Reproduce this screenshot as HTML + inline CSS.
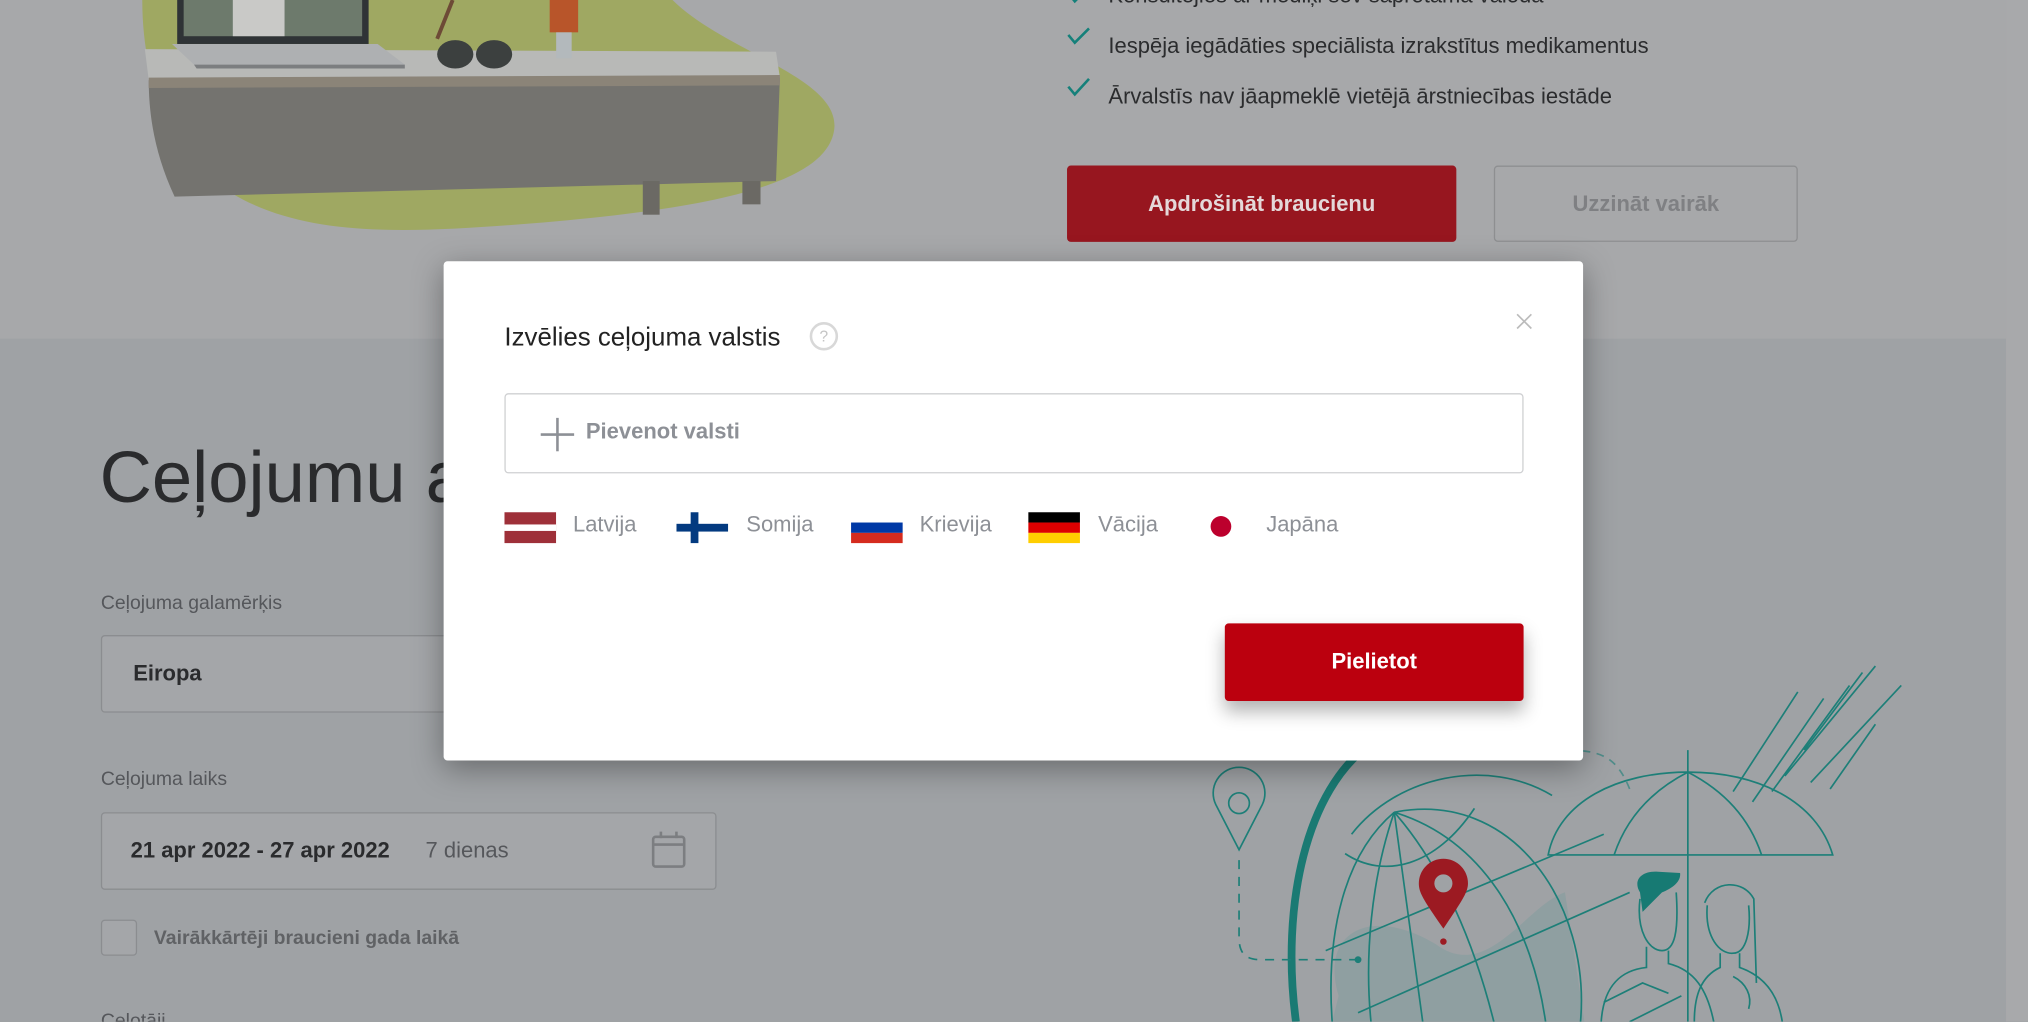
<!DOCTYPE html>
<html><head><meta charset="utf-8"><style>
html,body{margin:0;padding:0;width:2028px;height:1022px;overflow:hidden;background:#9fa2a5}
#w{position:absolute;left:0;top:0;width:1568px;height:790px;transform:scale(1.29337);transform-origin:0 0;font-family:"Liberation Sans",sans-serif;overflow:hidden}
.a{position:absolute}
.t{position:absolute;white-space:nowrap}
</style></head><body><div id="w">
<div class="a" style="left:0;top:0;width:1568px;height:262px;background:#a7a8aa"></div>
<div class="a" style="left:0;top:262px;width:1568px;height:528px;background:#9fa2a5"></div>
<div class="a" style="left:1551px;top:0;width:17px;height:790px;background:#a8a9ab"></div>

<!-- left image -->
<svg class="a" style="left:0;top:0" width="700" height="200" viewBox="0 0 700 200">
<path d="M110 0 L520 0 C560 40 650 60 645 100 C640 140 560 160 420 172 C320 180 240 185 180 150 C130 120 110 60 110 0Z" fill="#9fa862"/>
<path d="M112 38 L600 40 L603 60 L115 62Z" fill="#b8b9b7"/>
<path d="M115 62 L603 60 L600 140 L135 152 C120 120 115 90 115 62Z" fill="#74736f"/>
<path d="M115 60 L603 58 L603 66 L115 68Z" fill="#8b8478"/>
<rect x="497" y="140" width="13" height="26" fill="#6b6964"/>
<rect x="574" y="140" width="14" height="18" fill="#6b6964"/>
<rect x="137" y="0" width="148" height="34" fill="#2f3336"/>
<rect x="142" y="0" width="138" height="28" fill="#6d7a6c"/>
<rect x="180" y="0" width="40" height="28" fill="#c9c9c7"/>
<path d="M133 34 L292 34 L313 50 L150 50Z" fill="#aeb0b2"/>
<path d="M150 50 L313 50 L313 53 L152 53Z" fill="#7c7e80"/>
<ellipse cx="352" cy="42" rx="14" ry="11" fill="#3c403f"/>
<ellipse cx="382" cy="42" rx="14" ry="11" fill="#3c403f"/>
<rect x="425" y="0" width="22" height="25" fill="#b8552a"/>
<rect x="430" y="25" width="12" height="20" fill="#b3b9bc"/>
<path d="M338 30 L350 0" stroke="#6d4a36" stroke-width="3"/>
</svg>

<!-- right top -->
<svg class="a" style="left:825px;top:-10px" width="20" height="100"><path d="M1 5 L6 11 L17 0" fill="none" stroke="#15807a" stroke-width="2"/><path d="M1 37 L6 43 L17 32" fill="none" stroke="#15807a" stroke-width="2"/><path d="M1 77 L6 83 L17 71" fill="none" stroke="#15807a" stroke-width="2"/></svg>
<div class="t" style="left:857px;top:-13px;font-size:17px;color:#2b2c2e">Konsultējies ar mediķi sev saprotamā valodā</div>
<div class="t" style="left:857px;top:26px;font-size:17px;color:#2b2c2e">Iespēja iegādāties speciālista izrakstītus medikamentus</div>
<div class="t" style="left:857px;top:65px;font-size:17px;color:#2b2c2e">Ārvalstīs nav jāapmeklē vietējā ārstniecības iestāde</div>
<div class="a" style="left:825px;top:128px;width:301px;height:59px;background:#97161f;border-radius:3px;color:#e4d8d9;font-size:17px;font-weight:bold;text-align:center;line-height:59px">Apdrošināt braucienu</div>
<div class="a" style="left:1155px;top:128px;width:233px;height:57px;border:1px solid #8e8f91;border-radius:3px;color:#7f8083;font-size:17px;font-weight:bold;text-align:center;line-height:57px">Uzzināt vairāk</div>

<!-- form -->
<div class="t" style="left:77px;top:336px;font-size:56px;color:#2a2b2d">Ceļojumu apdrošināšana</div>
<div class="t" style="left:78px;top:458px;font-size:15px;color:#55575b">Ceļojuma galamērķis</div>
<div class="a" style="left:78px;top:491px;width:400px;height:58px;border:1px solid #8b8d90;border-radius:3px;background:#a4a6a9"></div>
<div class="t" style="left:103px;top:511px;font-size:17px;font-weight:bold;color:#2a2b2d">Eiropa</div>
<div class="t" style="left:78px;top:594px;font-size:15px;color:#55575b">Ceļojuma laiks</div>
<div class="a" style="left:78px;top:628px;width:474px;height:58px;border:1px solid #8b8d90;border-radius:3px;background:#a4a6a9"></div>
<div class="t" style="left:101px;top:648px;font-size:17px;font-weight:bold;color:#2a2b2d">21 apr 2022 - 27 apr 2022</div>
<div class="t" style="left:329px;top:648px;font-size:17px;color:#55575b">7 dienas</div>
<svg class="a" style="left:503px;top:642px" width="28" height="30"><rect x="2" y="5" width="24" height="23" rx="2" fill="none" stroke="#7c7e81" stroke-width="2"/><path d="M2 11 H26 M8 1 V6 M20 1 V6" stroke="#7c7e81" stroke-width="2"/></svg>
<div class="a" style="left:78px;top:711px;width:26px;height:26px;border:1px solid #8b8d90;border-radius:3px;background:#a4a6a9"></div>
<div class="t" style="left:119px;top:717px;font-size:15px;font-weight:bold;color:#606265">Vairākkārtēji braucieni gada laikā</div>
<div class="t" style="left:78px;top:781px;font-size:15px;color:#55575b">Ceļotāji</div>

<!-- illustration -->
<svg class="a" style="left:0;top:0" width="1568" height="790" viewBox="0 0 1568 790" fill="none" stroke="#1d7f78" stroke-width="1.3">
<path d="M1035 770 C1020 720 1060 700 1110 730 C1150 760 1180 700 1210 690 L1225 790 L1030 790Z" fill="#8f9fa1" stroke="none"/>
<path d="M1260 610 C1240 560 1210 590 1075 580" stroke-dasharray="6 5" opacity=".6"/>
<path d="M1060 575 C1010 610 990 700 1002 790" stroke-width="6" stroke="#1a7a73"/>
<path d="M1078 628 C1040 660 1025 720 1030 790"/>
<path d="M1078 628 C1170 610 1230 700 1222 790"/>
<path d="M1078 628 C1060 680 1055 740 1060 790"/>
<path d="M1078 628 L1100 790"/>
<path d="M1078 628 C1115 670 1140 730 1155 790"/>
<path d="M1078 628 C1150 650 1185 720 1195 790"/>
<path d="M1040 660 C1070 680 1110 670 1140 625"/>
<path d="M1045 645 C1080 600 1150 585 1200 615"/>
<path d="M1025 735 L1240 645"/>
<path d="M1050 783 L1260 690"/>
<path d="M1116 718 C1100 695 1097 690 1097 683 A19 19 0 1 1 1135 683 C1135 690 1130 697 1116 718Z" fill="#9c1a22" stroke="none"/>
<circle cx="1116" cy="683" r="7" fill="#9fa2a5" stroke="none"/>
<circle cx="1116" cy="728" r="2.5" fill="#9c1a22" stroke="none"/>
<path d="M958 657 L940 622 A20 20 0 1 1 976 622Z"/>
<circle cx="958" cy="621" r="8"/>
<path d="M958 665 V725 C958 738 964 742 975 742 H1048" stroke-dasharray="7 6"/>
<circle cx="1050" cy="742" r="2" fill="#1d7f78"/>
<path d="M1197 661 C1205 620 1250 597 1305 597 C1360 597 1405 620 1417 661Z"/>
<path d="M1305 597 C1270 615 1255 640 1248 661 M1305 597 C1340 615 1355 640 1362 661 M1305 597 V790 M1305 597 V580" />
<path d="M1340 612 L1390 535 M1355 620 L1410 540 M1370 612 L1430 530 M1380 600 L1450 515 M1400 605 L1470 530 M1415 610 L1450 560 M1395 580 L1440 520" />
<path d="M1268 690 C1262 680 1270 673 1282 674 L1299 675 C1300 683 1290 688 1285 690 L1270 705Z" fill="#177a73" stroke="none"/>
<path d="M1268 695 C1265 720 1275 735 1285 735 C1295 735 1298 720 1296 690"/>
<path d="M1273 732 V748 C1255 750 1240 760 1238 790 M1290 735 V745 C1310 750 1320 765 1325 790"/>
<path d="M1240 775 L1270 760 L1290 768 M1260 790 L1300 770"/>
<path d="M1318 698 C1325 680 1348 680 1356 695 L1358 760 M1320 700 C1318 725 1330 738 1340 737 C1350 737 1354 720 1352 700 M1330 737 V748 C1315 755 1310 770 1310 790 M1345 737 V748 C1365 755 1375 770 1378 790"/>
<path d="M1340 755 C1350 760 1355 770 1352 780"/>
</svg>

<!-- modal -->
<div class="a" style="left:343px;top:202px;width:881px;height:386px;background:#fff;border-radius:3px;box-shadow:0 6px 24px rgba(0,0,0,.35)">
<div class="t" style="left:47px;top:48px;font-size:20px;color:#222">Izvēlies ceļojuma valstis</div>
<div class="a" style="left:283px;top:47px;width:18px;height:18px;border:2px solid #d8d8d8;border-radius:50%;color:#c4c4c4;font-size:12px;text-align:center;line-height:18px">?</div>
<svg class="a" style="left:829px;top:40px" width="13" height="13"><path d="M1 1 L12 12 M12 1 L1 12" stroke="#bbb" stroke-width="1.3"/></svg>
<div class="a" style="left:47px;top:102px;width:786px;height:60px;border:1px solid #cfd0d2;border-radius:3px"></div>
<svg class="a" style="left:75px;top:121px" width="26" height="26"><path d="M13 0 V26 M0 13 H26" stroke="#8d9096" stroke-width="2"/></svg>
<div class="t" style="left:110px;top:122px;font-size:17px;font-weight:bold;color:#8d9096">Pievenot valsti</div>
<svg class="a" style="left:47px;top:194px" width="40" height="24"><rect width="40" height="24" fill="#9e3039"/><rect y="9.5" width="40" height="5" fill="#fff"/></svg>
<div class="t" style="left:100px;top:194px;font-size:17px;color:#8d9096">Latvija</div>
<svg class="a" style="left:180px;top:194px" width="40" height="24"><rect width="40" height="24" fill="#fff"/><rect x="11" width="6" height="24" fill="#033a80"/><rect y="9" width="40" height="6" fill="#033a80"/></svg>
<div class="t" style="left:234px;top:194px;font-size:17px;color:#8d9096">Somija</div>
<svg class="a" style="left:315px;top:194px" width="40" height="24"><rect width="40" height="24" fill="#fff"/><rect y="8" width="40" height="8" fill="#0039a6"/><rect y="16" width="40" height="8" fill="#d52b1e"/></svg>
<div class="t" style="left:368px;top:194px;font-size:17px;color:#8d9096">Krievija</div>
<svg class="a" style="left:452px;top:194px" width="40" height="24"><rect width="40" height="8" fill="#000"/><rect y="8" width="40" height="8" fill="#dd0000"/><rect y="16" width="40" height="8" fill="#ffce00"/></svg>
<div class="t" style="left:506px;top:194px;font-size:17px;color:#8d9096">Vācija</div>
<svg class="a" style="left:591px;top:197px" width="20" height="20"><circle cx="10" cy="8" r="8" fill="#bc002d"/></svg>
<div class="t" style="left:636px;top:194px;font-size:17px;color:#8d9096">Japāna</div>
<div class="a" style="left:604px;top:280px;width:231px;height:60px;background:#bb000e;border-radius:3px;box-shadow:0 8px 14px rgba(0,0,0,.3);color:#fff;font-size:17px;font-weight:bold;text-align:center;line-height:60px">Pielietot</div>
</div>
</div></body></html>
